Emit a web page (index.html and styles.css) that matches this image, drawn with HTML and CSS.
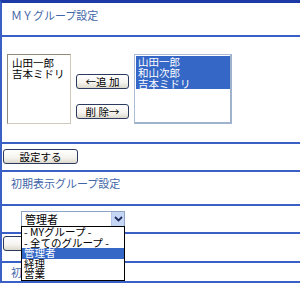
FILE: index.html
```html
<!DOCTYPE html>
<html lang="ja">
<head>
<meta charset="utf-8">
<link rel="stylesheet" href="styles.css">
</head>
<body>
<div class="page">
  <div class="sec title-row first"><span class="title">ＭＹグループ設定</span></div>
  <div class="sec lists-row">
    <div class="listbox lb-left">
      <div class="opt">山田一郎</div>
      <div class="opt">吉本ミドリ</div>
    </div>
    <div class="btns">
      <button class="btn mid">←追 加</button>
      <button class="btn mid">削 除→</button>
    </div>
    <div class="listbox lb-right">
      <div class="opt sel">山田一郎</div>
      <div class="opt sel">和山次郎</div>
      <div class="opt sel">吉本ミドリ</div>
    </div>
  </div>
  <div class="sec btn-row"><button class="btn set">設定する</button></div>
  <div class="sec title-row t2"><span class="title">初期表示グループ設定</span></div>
  <div class="sec select-row">
    <div class="select">
      <span class="select-text">管理者</span>
      <span class="select-arrow"><svg width="9" height="6" viewBox="0 0 9 6"><path d="M1 1 L4.5 4.5 L8 1" fill="none" stroke="#1f2a5c" stroke-width="1.8"/></svg></span>
    </div>
    <div class="dropdown">
      <div class="dopt">- MYグループ -</div>
      <div class="dopt">- 全てのグループ -</div>
      <div class="dopt dsel">管理者</div>
      <div class="dopt">経理</div>
      <div class="dopt">営業</div>
    </div>
  </div>
  <div class="sec btn-row b2"><button class="btn set" aria-label="設定する"></button></div>
  <div class="sec title-row t3"><span class="title">初</span></div>
</div>
</body>
</html>
```

FILE: styles.css
```css
html, body {
  margin: 0;
  padding: 0;
  background: #ffffff;
}
body {
  font-family: "Noto Sans CJK JP", "Noto Sans", sans-serif;
  font-size: 11px;
  color: #000;
}
.page {
  width: 300px;
  overflow: hidden;
}
.sec {
  border-left: 2px solid #3a60c6;
  border-bottom: 2px solid #3a60c6;
  box-sizing: border-box;
}
.first {
  border-top: 3px solid #1b3aa6;
}
.title-row {
  height: 37px;
  padding: 4px 0 0 9px;
}
.first { height: 37px; }
.t2 { height: 34px; padding-top: 3px; }
.t3 { height: 20px; padding-top: 1px; }
.title {
  color: #3f66a8;
  font-size: 11px;
  line-height: 13px;
}
.lists-row {
  height: 107px;
  display: flex;
  align-items: flex-start;
  padding: 17px 0 0 5px;
}
.listbox {
  height: 70px;
  box-sizing: border-box;
  background: #fff;
  padding-top: 2px;
}
.lb-left {
  width: 64px;
  border: 1px solid #cfcabb;
  border-top-color: #8f8a7c;
  border-left-color: #8f8a7c;
  padding-left: 4px;
}
.lb-right {
  width: 98px;
  margin-left: 5px;
  border: 1px solid #a9bdd4;
  border-right: 2px solid #9fb3cc;
  border-bottom: 2px solid #9fb3cc;
  padding: 1px 0 0 1px;
}
.opt {
  line-height: 11px;
  font-size: 10.5px;
  white-space: nowrap;
}
.lb-right .opt { padding-left: 2px; }
.opt.sel {
  background: #3567c6;
  color: #fff;
}
.btns {
  display: flex;
  flex-direction: column;
  margin-left: 5px;
  padding-top: 20px;
  gap: 15px;
}
.btn {
  font-family: "Noto Sans CJK JP", "Noto Sans", sans-serif;
  font-size: 10.5px;
  line-height: 11px;
  height: 15px;
  padding: 0;
  margin: 0;
  border: 1px solid #2b3a5e;
  border-radius: 3px;
  background: linear-gradient(#ffffff 0%, #f4f3ee 60%, #dcd8cc 100%);
  color: #000;
  box-sizing: border-box;
  white-space: pre;
  display: block;
}
.mid { width: 53px; }
.btn-row {
  height: 28px;
  padding: 5px 0 0 1px;
}
.b2 { height: 29px; padding-top: 2px; }
.set { width: 75px; }
.select-row {
  position: relative;
  height: 28px;
  padding: 5px 0 0 19px;
}
.select {
  width: 104px;
  height: 16px;
  box-sizing: border-box;
  border: 1px solid #8ca3c6;
  display: flex;
  align-items: center;
  justify-content: space-between;
  background: #fff;
}
.select-text {
  padding-left: 3px;
  font-size: 11px;
  line-height: 12px;
}
.select-arrow {
  width: 13px;
  height: 14px;
  background: #c6d6f5;
  border-left: 1px solid #b3c6ea;
  display: flex;
  align-items: center;
  justify-content: center;
  box-sizing: border-box;
}
.dropdown {
  position: absolute;
  top: 20px;
  left: 19px;
  width: 104px;
  box-sizing: border-box;
  border: 1px solid #000;
  background: #fff;
  z-index: 2;
}
.dopt {
  line-height: 10.6px;
  height: 10.6px;
  font-size: 10.5px;
  padding-left: 2px;
  white-space: nowrap;
}
.dopt.dsel {
  background: #3567c6;
  color: #fff;
}
```
